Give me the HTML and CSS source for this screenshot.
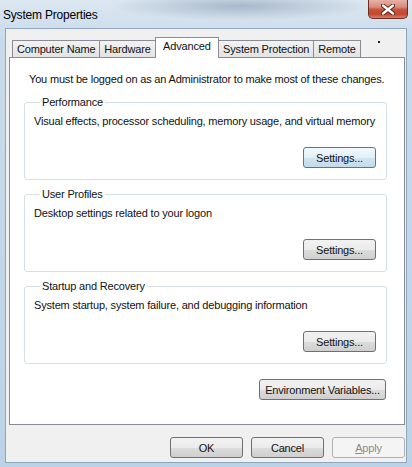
FILE: index.html
```html
<!DOCTYPE html>
<html lang="en">
<head>
    <meta charset="UTF-8">
    <title>System Properties</title>
    <link rel="stylesheet" href="styles.css">
</head>
<body>
<div class="window">
    <div class="titlebar">
        <span class="title">System Properties</span>
        <button class="close" type="button" aria-label="Close">
            <svg width="14" height="11" viewBox="0 0 14 11">
                <path d="M2 1.5 L12 9.5 M12 1.5 L2 9.5" stroke="#5a1e16" stroke-width="4.2" stroke-linecap="round"/>
                <path d="M2 1.5 L12 9.5 M12 1.5 L2 9.5" stroke="#fff" stroke-width="2.4" stroke-linecap="round"/>
            </svg>
        </button>
    </div>
    <div class="client">
        <div class="tabs">
            <span class="tab">Computer Name</span>
            <span class="tab">Hardware</span>
            <span class="tab active">Advanced</span>
            <span class="tab">System Protection</span>
            <span class="tab">Remote</span>
            <span class="dot"></span>
        </div>
        <div class="panel">
            <p class="note">You must be logged on as an Administrator to make most of these changes.</p>

            <fieldset class="group">
                <legend>Performance</legend>
                <p class="desc">Visual effects, processor scheduling, memory usage, and virtual memory</p>
                <div class="row"><button class="btn focus" type="button">Settings...</button></div>
            </fieldset>

            <fieldset class="group">
                <legend>User Profiles</legend>
                <p class="desc">Desktop settings related to your logon</p>
                <div class="row"><button class="btn" type="button">Settings...</button></div>
            </fieldset>

            <fieldset class="group">
                <legend>Startup and Recovery</legend>
                <p class="desc">System startup, system failure, and debugging information</p>
                <div class="row"><button class="btn" type="button">Settings...</button></div>
            </fieldset>

            <div class="row env"><button class="btn wide" type="button">Environment Variables...</button></div>
        </div>
        <div class="footer">
            <button class="btn" type="button">OK</button>
            <button class="btn" type="button">Cancel</button>
            <button class="btn" type="button" disabled><u>A</u>pply</button>
        </div>
    </div>
</div>
</body>
</html>
```

FILE: styles.css
```css
body{
    margin: 0;
    font-family: "Liberation Sans", Arial, sans-serif;
    font-size: 11px;
    letter-spacing: -0.18px;
    color: #111;
}
p{
    margin: 0;
}
.window{
    width: 412px;
    height: 467px;
    display: flex;
    flex-direction: column;
    background:
        radial-gradient(ellipse 130px 14px at 240px 6px, rgba(110,130,155,.45), rgba(110,130,155,0)),
        linear-gradient(#dce7f1, #c9dbea 40px, #bcd2e6);
    overflow: hidden;
}
.titlebar{
    height: 28px;
    display: flex;
    align-items: flex-start;
    justify-content: space-between;
    flex-shrink: 0;
}
.title{
    padding: 8px 0 0 3px;
    font-size: 12px;
    letter-spacing: -0.2px;
    line-height: 15px;
    color: #000;
    white-space: nowrap;
}
.close{
    margin: 0 4px 0 6px;
    width: 40px;
    height: 19px;
    flex-shrink: 0;
    padding: 0;
    border: 1px solid #6b2b22;
    border-top: none;
    border-radius: 0 0 5px 5px;
    background: linear-gradient(#e6b1a6 0%, #d88c7c 40%, #c65540 52%, #c2452d 78%, #d9806c 100%);
    display: flex;
    align-items: center;
    justify-content: center;
}
.client{
    flex: 1;
    margin: 0 5px 4px 5px;
    border: 1px solid #8ea5bd;
    background: #f0f0f0;
    display: flex;
    flex-direction: column;
}
.tabs{
    display: flex;
    align-items: flex-end;
    height: 20px;
    margin: 8px 0 0 6px;
    position: relative;
    z-index: 1;
}
.tab{
    height: 16px;
    line-height: 16px;
    padding: 0 4px;
    border: 1px solid #898c95;
    border-bottom: none;
    border-left: none;
    background: linear-gradient(#f2f2f2, #e3e3e3);
    white-space: nowrap;
}
.tab:first-child{
    border-left: 1px solid #898c95;
}
.tab.active{
    height: 20px;
    line-height: 17px;
    padding: 0 7.5px;
    margin-bottom: -1px;
    background: #fff;
    border-left: 1px solid #898c95;
    margin-left: -1px;
}
.dot{
    width: 2px;
    height: 2px;
    background: #222;
    align-self: flex-start;
    margin: 4px 0 0 17px;
}
.panel{
    flex: 1;
    margin: 0 1px 0 3px;
    border: 1px solid #898c95;
    background: #fff;
    padding: 0 17px 0 14px;
}
.note{
    margin: 13px 0 8px 5px;
    line-height: 16px;
    white-space: nowrap;
}
.group{
    min-width: 0;
    margin: 0 0 7px 0;
    padding: 4px 10px 11px 9px;
    border: 1px solid #d5dfe5;
    border-radius: 3px;
}
.group legend{
    margin-left: 6px;
    padding: 0 2px;
    line-height: 14px;
}
.desc{
    line-height: 16px;
    white-space: nowrap;
}
.row{
    display: flex;
    justify-content: flex-end;
    margin-top: 18px;
}
.env{
    margin: 15px 1px 0 0;
}
.btn{
    width: 73px;
    height: 21px;
    padding: 0;
    font-family: inherit;
    font-size: 11px;
    letter-spacing: inherit;
    color: #111;
    white-space: nowrap;
    border: 1px solid #707070;
    border-radius: 3px;
    background: linear-gradient(#f2f2f2 0%, #ebebeb 50%, #dddddd 51%, #cfcfcf 100%);
}
.btn.focus{
    border-color: #3c7fb1;
    background: linear-gradient(#f1f8fd 0%, #e2eff7 50%, #d2e5f2 51%, #c3dbea 100%);
}
.btn.wide{
    width: 127px;
}
.btn:disabled{
    color: #8a8a8a;
    border-color: #adb2b5;
    background: #f4f4f4;
}
.footer{
    display: flex;
    justify-content: flex-end;
    gap: 8px;
    padding: 12px 1px 4px 0;
}
```
